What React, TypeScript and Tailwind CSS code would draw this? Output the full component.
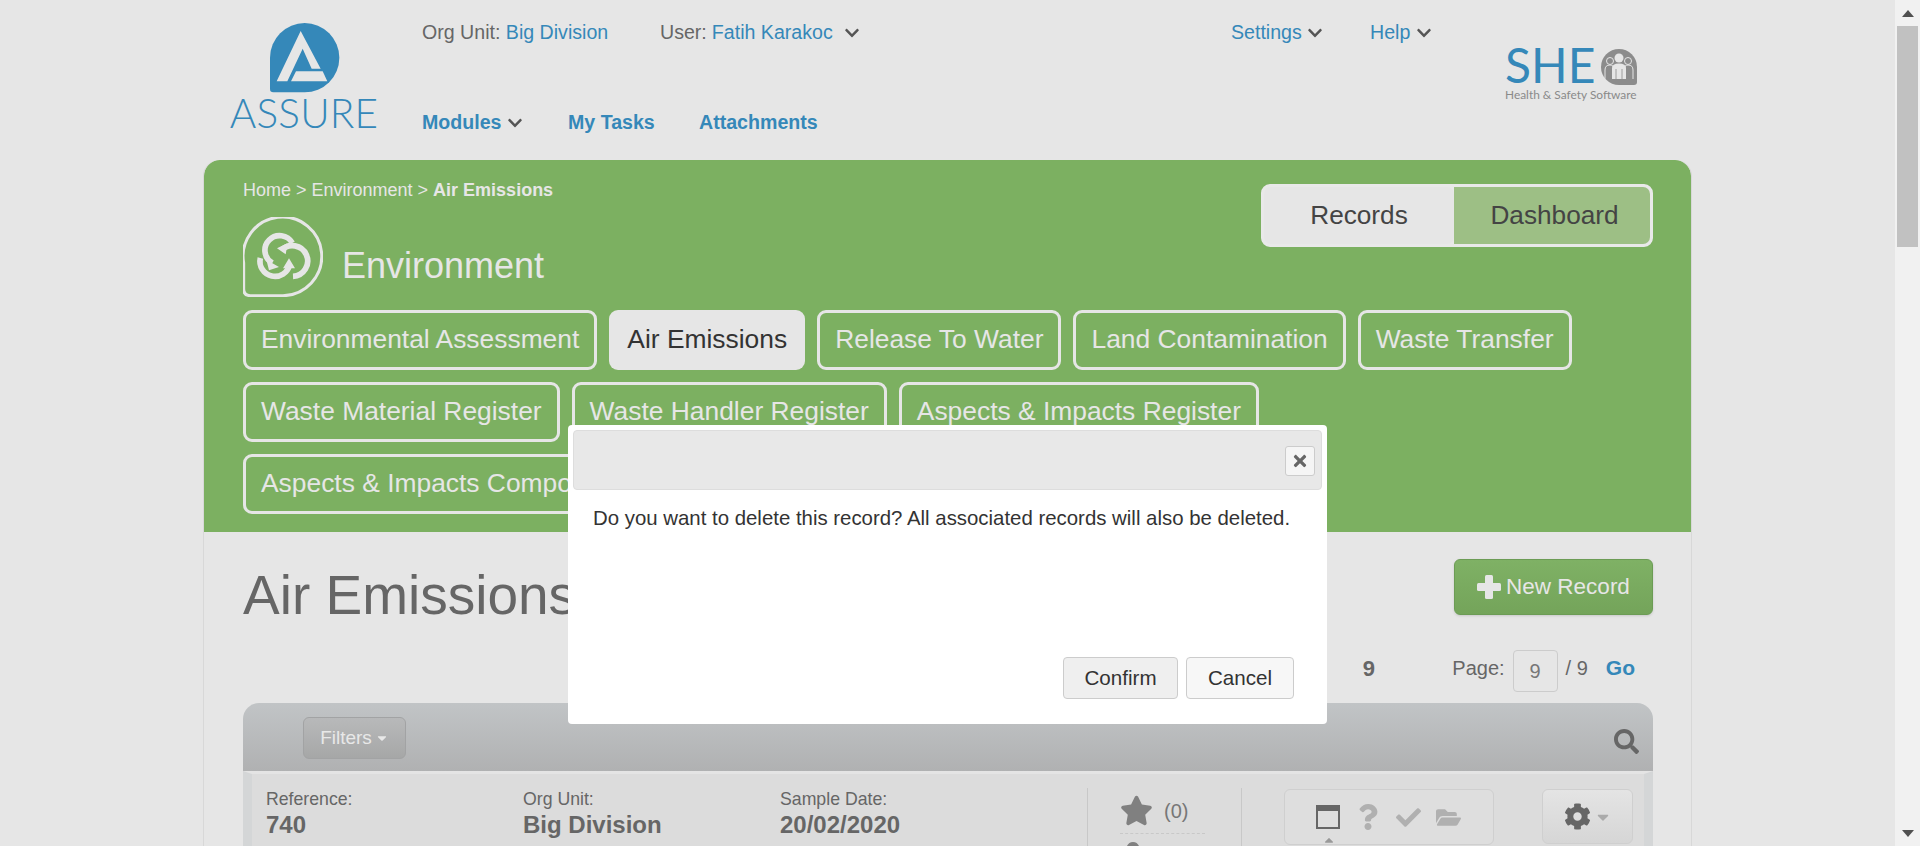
import React from 'react';
import { FaChevronDown, FaTimes, FaSearch, FaStar, FaCheck, FaCog, FaFolderOpen, FaQuestion, FaUser, FaCaretDown, FaCaretUp } from 'react-icons/fa';

const row1 = ['Environmental Assessment', 'Air Emissions', 'Release To Water', 'Land Contamination', 'Waste Transfer'];
const row2 = ['Waste Material Register', 'Waste Handler Register', 'Aspects & Impacts Register', 'Aspects & Impacts Component Register'];

const AssureLogo = () => (
  <svg width="70" height="70" viewBox="180 38 210 210">
    <path d="M180 142 A104 104 0 1 1 284 246 L190 246 Q180 246 180 236 Z" fill="#3588b9" />
    <path d="M272 62 L200 213 L232 213 L278 115 L305 175 L332 175 Z" fill="#e6e6e6" />
    <path d="M258 183 L338 183 L352 213 L243 213 Z" fill="#e6e6e6" />
  </svg>
);

const EnvIcon = () => (
  <svg width="80" height="80" viewBox="40 22 240 240" fill="none">
    <path d="M42 160 A118 118 0 1 1 160 258 L62 258 Q42 258 42 238 Z" stroke="#e6e6e6" strokeWidth="9" />
    <g stroke="#e6e6e6" strokeWidth="17">
      <path d="M128 160 A44 44 0 1 1 188 100" />
      <path d="M155 122 A46 46 0 1 1 190 200" />
      <path d="M180 165 A45 45 0 1 1 92 145" />
    </g>
    <path d="M110 150 L148 172 L118 182 Z M174 100 L168 134 L142 116 Z M178 146 L196 176 L160 176 Z" fill="#e6e6e6" />
  </svg>
);

const SheBadge = () => (
  <svg width="36" height="36" viewBox="0 0 36 36">
    <path d="M0 18 A18 18 0 1 1 36 18 L36 33 Q36 36 33 36 L18 36 A18 18 0 0 1 0 18 Z" fill="#8c8c8c" />
    <g fill="#8c8c8c" stroke="#e6e6e6" strokeWidth="1">
      <path d="M4 30 V21 Q4 16 9 16 Q13 16 13 21 V30" />
      <path d="M23 30 V21 Q23 16 27 16 Q32 16 32 21 V30" />
      <circle cx="9" cy="12" r="3.5" />
      <circle cx="27" cy="12" r="3.5" />
    </g>
    <g fill="#e6e6e6">
      <circle cx="18" cy="9" r="4.5" />
      <path d="M11 30 V19 Q11 14.5 18 14.5 Q25 14.5 25 19 V30 Z" />
    </g>
    <path d="M15 20 V30 M21 20 V30" stroke="#8c8c8c" strokeWidth="0.8" />
  </svg>
);

const PlusIcon = () => (
  <svg width="24" height="24" viewBox="0 0 24 24" fill="#e6e6e6">
    <rect x="8" y="0" width="8" height="24" rx="1.5" />
    <rect x="0" y="8" width="24" height="8" rx="1.5" />
  </svg>
);

const Chip = ({ label }: { label: string }) => (
  <div
    className={
      label === 'Air Emissions'
        ? 'h-[60px] flex items-center px-[18px] rounded-[9px] bg-[#e6e6e6] text-[#333333] text-[26.4px]'
        : 'h-[60px] flex items-center px-[15px] rounded-[9px] border-[3px] border-[#e6e6e6] text-[#e6e6e6] text-[26.4px] whitespace-nowrap'
    }
  >
    {label}
  </div>
);

const Field = ({ label, value }: { label: string; value: string }) => (
  <div className="w-[257px] pt-[14px]">
    <div className="text-[17.7px] leading-[22px] text-[#666666]">{label}</div>
    <div className="text-[24px] leading-[28px] font-bold text-[#666666] mt-[1px]">{value}</div>
  </div>
);

export default function App() {
  return (
    <div className="h-[846px] overflow-hidden flex bg-[#e6e6e6] font-['Liberation_Sans',Arial,sans-serif] relative">
      <div className="flex-1 min-w-0">
        {/* Header */}
        <header className="h-[160px] flex">
          <div className="w-[422px] pl-[231px] pt-[23px] shrink-0">
            <div className="w-[146px] flex flex-col items-center">
              <div className="ml-[2px]"><AssureLogo /></div>
              <div className="font-['Lato',sans-serif] font-light text-[40.5px] leading-[36px] tracking-[0.2px] text-[#3588b9] mt-[2px]">ASSURE</div>
            </div>
          </div>
          <div className="w-[1083px] shrink-0">
            <div className="flex items-center h-[20px] mt-[23px] text-[19.6px] text-[#666666]">
              <div className="w-[238px] whitespace-nowrap">Org Unit: <span className="text-[#3588b9]">Big Division</span></div>
              <div className="w-[571px] flex items-center">User: <span className="text-[#3588b9] ml-[5px]">Fatih Karakoc</span><FaChevronDown className="ml-[11px] text-[#555555]" size={16} /></div>
              <div className="w-[139px] flex items-center text-[#3588b9]">Settings<FaChevronDown className="ml-[5px] text-[#555555]" size={16} /></div>
              <div className="flex items-center text-[#3588b9]">Help<FaChevronDown className="ml-[6px] text-[#555555]" size={16} /></div>
            </div>
            <div className="flex items-center h-[20px] mt-[70px] text-[19.6px] font-bold text-[#3588b9]">
              <div className="w-[146px] flex items-center">Modules<FaChevronDown className="ml-[6px] text-[#555555]" size={16} /></div>
              <div className="w-[131px]">My Tasks</div>
              <div>Attachments</div>
            </div>
          </div>
          <div className="pt-[42px]">
            <div className="flex items-center">
              <div className="font-['Lato',sans-serif] font-normal text-[48px] leading-[46px] text-[#3588b9]">SHE</div>
              <div className="ml-[6px] mt-[3px]"><SheBadge /></div>
            </div>
            <div className="font-['Lato',sans-serif] text-[11.9px] leading-[14px] text-[#8a8a8a] whitespace-nowrap">Health &amp; Safety Software</div>
          </div>
        </header>

        {/* Panel */}
        <div className="ml-[203px] w-[1489px] border-x border-[#d8d8d8] rounded-t-[16px] h-[686px] overflow-hidden">
          <section className="bg-[#7cb061] h-[372px] pl-[39px] pr-[38px] rounded-t-[16px]">
            <div className="flex justify-between">
              <div>
                <div className="pt-[20px] text-[18px] leading-[20px] text-[#e6e6e6]">Home &gt; Environment &gt; <b>Air Emissions</b></div>
                <div className="flex items-center mt-[17px]">
                  <EnvIcon />
                  <div className="ml-[19px] mt-[18px] text-[36px] text-[#e6e6e6]">Environment</div>
                </div>
              </div>
              <div className="mt-[24px] w-[392px] h-[63px] flex border-[3px] border-[#e9e9e9] rounded-[9px] bg-[#e9e9e9] text-[26.2px] text-[#444444]">
                <div className="w-[190px] flex items-center justify-center bg-[#e6e6e6] rounded-[7px]">Records</div>
                <div className="flex-1 flex items-center justify-center pl-[5px] bg-[#9dbf85] rounded-r-[7px]">Dashboard</div>
              </div>
            </div>
            <nav className="mt-[13px] flex flex-wrap gap-[12px]">
              {row1.concat(row2).map((label) => (
                <Chip key={label} label={label} />
              ))}
            </nav>
          </section>

          <section className="pl-[39px] pr-[38px]">
            <div className="flex justify-between h-[171px]">
              <h1 className="mt-[32px] text-[55px] leading-[62px] text-[#666666]">Air Emissions</h1>
              <div className="flex flex-col items-end">
                <button className="mt-[27px] w-[199px] h-[56px] flex items-center justify-center rounded-[6px] border border-[#6c9c55] bg-gradient-to-b from-[#7fb165] to-[#74a45a] text-[#e6e6e6] text-[22.5px] shadow-sm">
                  <span className="mr-[5px]"><PlusIcon /></span>New Record
                </button>
                <div className="flex items-center mt-[29px] text-[#666666] text-[20px] relative">
                  <span className="absolute right-[278px] text-[22px] font-bold">9</span>
                  <span>Page:</span>
                  <span className="ml-[8px] mt-[6px] w-[45px] h-[42px] flex items-center justify-center border border-[#cccccc] rounded-[4px] text-[#777777]">9</span>
                  <span className="ml-[8px]">/ 9</span>
                  <span className="ml-[18px] mr-[18px] font-bold text-[21px] text-[#3588b9]">Go</span>
                </div>
              </div>
            </div>

            <div className="h-[68px] flex items-center justify-between rounded-t-[16px] bg-gradient-to-b from-[#c1c4c6] to-[#b0b1b2] pl-[60px] pr-[14px]">
              <div className="w-[103px] h-[42px] mt-[2px] flex items-center justify-center rounded-[6px] border border-[#a2a3a4] bg-gradient-to-b from-[#b8b9ba] to-[#a6a7a7] text-[#e8e8e8] text-[19px]">
                Filters<FaCaretDown size={14} className="ml-[3px]" />
              </div>
              <FaSearch size={25} className="mt-[8px] text-[#666666]" />
            </div>

            <div className="h-[100px] flex border-x-[9px] border-x-[#d4d6d7] border-t-[3px] border-t-[#e4e4e4] bg-[#dcdcdc] pl-[14px]">
              <Field label="Reference:" value="740" />
              <Field label="Org Unit:" value="Big Division" />
              <Field label="Sample Date:" value="20/02/2020" />
              <div className="w-[50px]" />
              <div className="w-[155px] mt-[14px] border-x border-[#c8c8c8] pl-[32px]">
                <div className="flex items-center h-[46px] w-[85px] border-b border-dashed border-[#c8c8c8]">
                  <FaStar size={33} className="text-[#808080]" />
                  <span className="ml-[11px] text-[20px] text-[#777777]">(0)</span>
                </div>
                <FaUser size={26} className="mt-[8px] text-[#808080]" />
              </div>
              <div className="ml-[42px] mt-[15px] w-[210px] h-[56px] relative flex items-center gap-[15px] pl-[31px] rounded-[6px] border border-[#cfcfcf] bg-[#dedede]">
                <svg width="24" height="24" viewBox="0 0 24 24" className="text-[#666666]">
                  <path d="M0 0H24V24H0Z M2 6V22H22V6Z" fill="currentColor" fillRule="evenodd" />
                </svg>
                <FaQuestion size={26} className="text-[#b0b0b0]" />
                <FaCheck size={25} className="text-[#b0b0b0]" />
                <FaFolderOpen size={25} className="text-[#b0b0b0]" />
                <FaCaretUp size={14} className="absolute left-[37px] bottom-[-3px] text-[#999999]" />
              </div>
              <div className="ml-[48px] mt-[15px] w-[91px] h-[55px] flex items-center justify-center rounded-[6px] border border-[#cfcfcf] bg-gradient-to-b from-[#e4e4e4] to-[#d6d6d6]">
                <FaCog size={27} className="text-[#666666]" />
                <FaCaretDown size={18} className="ml-[3px] text-[#aaaaaa]" />
              </div>
            </div>
          </section>
        </div>
      </div>

      {/* Scrollbar */}
      <div className="w-[25px] shrink-0 bg-[#f1f1f1] flex flex-col items-center">
        <div className="h-[26px] flex items-center justify-center">
          <div className="w-0 h-0 border-x-[6px] border-x-transparent border-b-[7px] border-b-[#505050]" />
        </div>
        <div className="w-[21px] h-[221px] bg-[#c1c1c1]" />
        <div className="flex-1" />
        <div className="h-[26px] flex items-center justify-center">
          <div className="w-0 h-0 border-x-[6px] border-x-transparent border-t-[7px] border-t-[#505050]" />
        </div>
      </div>

      {/* Confirm dialog */}
      <div className="absolute left-[568px] top-[425px] w-[759px] h-[299px] bg-white rounded-[4px] p-[5px] flex flex-col">
        <div className="h-[60px] shrink-0 bg-[#e8e8e8] border border-[#dddddd] rounded-[4px] flex items-center justify-end pr-[6px]">
          <div className="w-[30px] h-[30px] mt-[2px] flex items-center justify-center bg-[#f5f5f5] border border-[#cccccc] rounded-[3px]">
            <FaTimes size={18} className="text-[#666666]" />
          </div>
        </div>
        <p className="mt-[16px] ml-[20px] text-[20.4px] leading-[24px] text-[#333333] whitespace-nowrap">Do you want to delete this record? All associated records will also be deleted.</p>
        <div className="mt-[127px] flex justify-end gap-[8px] pr-[28px]">
          <button className="w-[115px] h-[42px] rounded-[4px] border border-[#cccccc] bg-[#efefef] text-[20.6px] text-[#333333]">Confirm</button>
          <button className="w-[108px] h-[42px] rounded-[4px] border border-[#cccccc] bg-[#f7f7f7] text-[20.6px] text-[#333333]">Cancel</button>
        </div>
      </div>
    </div>
  );
}
